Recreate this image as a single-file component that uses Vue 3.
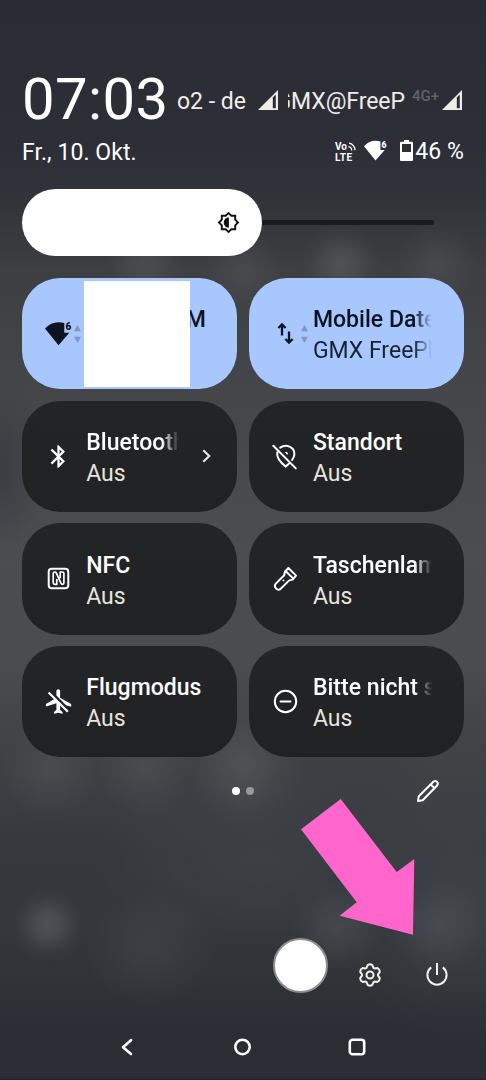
<template>
  <div class="shade">
    <header class="status">
      <div class="status__top">
        <span class="status__clock">07:03</span>
        <span class="status__carrier">o2 - de</span>
        <svg class="status__signal" viewBox="0 0 20 20">
          <path fill-rule="evenodd" d="M0 20 20 0v20zM14.8 7.6v10.6h3V4.6z" />
        </svg>
        <span class="status__carrier status__carrier--cut"><span>GMX@FreeP</span></span>
        <span class="status__net">4G+</span>
        <svg class="status__signal status__signal--last" viewBox="0 0 20 20">
          <path fill-rule="evenodd" d="M0 20 20 0v20zM14.8 7.6v10.6h3V4.6z" />
        </svg>
      </div>
      <div class="status__bottom">
        <span class="status__date">Fr., 10. Okt.</span>
        <svg class="status__volte" viewBox="0 0 21 20">
          <text x="0" y="8.2" textLength="12">Vo</text>
          <text x="0" y="18.8" textLength="17">LTE</text>
          <path d="M13.5 4.6a4 4 0 0 1 3.2 4M14 1.2a7 7 0 0 1 6 7" />
        </svg>
        <svg class="status__wifi" viewBox="0 0 27 27">
          <path d="M0 8.5Q6 2.2 13.5 2.2q3 0 5.8.8v9.8h5L13.5 25.2z" />
          <text x="20.4" y="10.3">6</text>
        </svg>
        <svg class="status__battery" viewBox="0 0 13 21">
          <path fill-rule="evenodd" d="M4 0h5v1.8h3q1 0 1 1V20q0 1-1 1H1q-1 0-1-1V2.8q0-1 1-1h3zM2 4v8h9V4z" />
        </svg>
        <span class="status__percent">46 %</span>
      </div>
    </header>

    <div class="slider">
      <div class="slider__fill">
        <svg class="slider__icon" viewBox="0 0 24 24">
          <path d="M20 8.69V4h-4.69L12 .69 8.69 4H4v4.69L.69 12 4 15.31V20h4.69L12 23.31 15.31 20H20v-4.69L23.31 12 20 8.69zm-2 5.79V18h-3.52L12 20.48 9.52 18H6v-3.52L3.52 12 6 9.52V6h3.52L12 3.52 14.48 6H18v3.52L20.48 12 18 14.48z" />
          <path d="M12.4 6.6v10.8a5.4 5.4 0 0 1 0-10.8z" />
        </svg>
      </div>
      <div class="slider__track"></div>
    </div>

    <main class="tiles">
      <button
        v-for="tile in tiles"
        :key="tile.id"
        class="tile"
        :class="{ 'tile--on': tile.active }"
      >
        <svg class="tile__icon" :viewBox="tile.box || '0 0 27 27'">
          <path v-if="tile.fill" :d="tile.fill" />
          <path v-if="tile.line" class="tile__line" :d="tile.line" />
          <path v-if="tile.thin" class="tile__line tile__line--thin" :d="tile.thin" />
          <text v-if="tile.id === 'wifi'" x="20.6" y="10.2">6</text>
        </svg>
        <svg v-if="tile.active" class="tile__activity" viewBox="0 0 7 18">
          <path d="M3.5 0 7 6.2H0zM3.5 18 0 11.8h7z" />
        </svg>
        <span class="tile__text">
          <span class="tile__label" :class="{ 'is-cut': tile.cut, 'is-end': tile.id === 'wifi' }">{{ tile.label }}</span>
          <span class="tile__state" :class="{ 'is-cut': tile.active }">{{ tile.state }}</span>
        </span>
        <svg v-if="tile.more" class="tile__more" viewBox="0 0 9 14">
          <path d="M1.3 1.2 7.2 7l-5.9 5.8" />
        </svg>
        <span v-if="tile.id === 'wifi'" class="tile__cover"></span>
      </button>
    </main>

    <div class="pager">
      <span class="pager__dots">
        <i class="pager__dot pager__dot--on"></i>
        <i class="pager__dot"></i>
      </span>
      <svg class="pager__edit" viewBox="0 0 24 24">
        <path d="M2 22.1l.8-4.9L17.3 2.7q1.9-1.5 3.6.1t.2 3.7L6.7 21.2zM14.6 5.4l4.2 4.1" />
      </svg>
    </div>

    <footer class="actions">
      <span class="actions__user"></span>
      <svg class="actions__icon" viewBox="0 0 24 24">
        <path d="M9.7 2.1Q12 .4 14.3 2.1l1.2 2.7 1 .6 3-.3q2.5 1.2 2.2 4L20 11.4v1.2l1.7 2.3q.3 2.8-2.2 4l-3-.3-1 .6-1.2 2.7q-2.3 1.7-4.6 0l-1.2-2.7-1-.6-3 .3q-2.5-1.2-2.2-4L4 12.6v-1.2L2.3 9.1q-.3-2.8 2.2-4l3 .3 1-.6z" />
        <circle cx="12" cy="12" r="3.5" />
      </svg>
      <svg class="actions__icon actions__icon--power" viewBox="0 0 24 24">
        <path d="M6.2 5.4a9.6 9.6 0 1 0 11.6 0M12 1v12" />
      </svg>
    </footer>

    <nav class="nav">
      <svg viewBox="0 0 20 20"><path d="M14 3.2 6 10.2l8 6.8" /></svg>
      <svg viewBox="0 0 20 20"><circle cx="10.5" cy="10" r="7.2" /></svg>
      <svg viewBox="0 0 20 20"><rect x="2.8" y="2.8" width="14.4" height="14.4" rx="2.8" /></svg>
    </nav>

    <!-- marker pointing at the power button -->
    <svg class="marker" viewBox="0 0 114 136">
      <path d="M0 30.3 39.7 0l56 73 17.6-13-1.3 75.7-73.3-19 17-13.4z" />
    </svg>
  </div>
</template>

<script setup>
const tiles = [
  {
    id: 'wifi',
    label: 'M',
    state: '',
    active: true,
    fill: 'M0 8.5Q6 2.2 13.5 2.2q3 0 5.8.8v9.8h5L13.5 25.2z',
  },
  {
    id: 'data',
    label: 'Mobile Daten',
    state: 'GMX FreePhone',
    active: true,
    cut: true,
    line: 'M10 15.6V4.8M6.4 8 10 4.3 13.6 8M17 11.4v10.8M13.4 19l3.6 3.7 3.6-3.7',
  },
  {
    id: 'bluetooth',
    label: 'Bluetooth',
    state: 'Aus',
    cut: true,
    more: true,
    box: '0 0 24 24',
    fill: 'M17.71 7.71L12 2h-1v7.59L6.41 5 5 6.41 10.59 12 5 17.59 6.41 19 11 14.41V22h1l5.71-5.71-4.3-4.29 4.3-4.29zM13 5.83l1.88 1.88L13 9.59V5.83zm1.88 10.46L13 18.17v-3.76l1.88 1.88z',
  },
  {
    id: 'location',
    label: 'Standort',
    state: 'Aus',
    fill: 'M13 9.4a1.7 1.7 0 0 1 2.8 1.8l-.6.6z',
    line: 'M1.3 2.8 23.8 25.4M8.2 4.6C14 .6 22.6 4 22.4 11.2q-.1 2.5-2.3 5.8M5.2 9.6C4.6 15 8.3 19.4 13.8 23.6l3-2.8',
  },
  {
    id: 'nfc',
    label: 'NFC',
    state: 'Aus',
    line: 'M6.8 3.7h13.4q3.1 0 3.1 3.1v13.4q0 3.1-3.1 3.1H6.8q-3.1 0-3.1-3.1V6.8q0-3.1 3.1-3.1z',
    thin: 'M11.8 19.4h-2q-1.6 0-1.6-1.6V8.6q0-1.6 1.6-1.6 1 0 1.5.9l4.6 10.3q.5 1.2 1.6 1.2 1.4 0 1.4-1.6V8.6q0-1.6-1.6-1.6h-2.1v5.4M11.8 19.4v-4.8',
  },
  {
    id: 'torch',
    label: 'Taschenlampe',
    state: 'Aus',
    cut: true,
    line: 'M16.4 3 24 10.6l-3.4 4-3.4.8-8.6 8.5q-2.3 1.7-4.5-.4t-.5-4.6L12.2 10.3l.7-3.5zM13.6 6l7.4 7.4M11.5 15.5v.1',
  },
  {
    id: 'flight',
    label: 'Flugmodus',
    state: 'Aus',
    box: '.7 1 22 22',
    fill: 'M13 9V3.5C13 2.67 12.33 2 11.5 2S10 2.67 10 3.5v3.68l7.83 7.83L22 16.2V14l-9-5zM3 5.27l4.99 4.99L1.5 14v2l8.5-2.5V19l-2 1.5V22l3.5-.8 3.5.8v-1.5L13 19v-3.73L18.73 21 20 19.73 4.27 4z',
  },
  {
    id: 'dnd',
    label: 'Bitte nicht stören',
    state: 'Aus',
    cut: true,
    line: 'M2.8 13.5a10.7 10.7 0 1 0 21.4 0a10.7 10.7 0 1 0-21.4 0zM8.5 13.5h10',
  },
]
</script>

<style>
body {
  background: #2b2d35;
}
</style>

<style scoped>
.shade {
  position: relative;
  display: flex;
  flex-direction: column;
  box-sizing: border-box;
  width: 486px;
  height: 1080px;
  padding: 66px 22px 0;
  overflow: hidden;
  border-bottom: 1px solid #251f2d;
  color: #fff;
  font-family: Roboto, "Liberation Sans", sans-serif;
  background:
    radial-gradient(circle 38px at 48px 925px, rgba(255,255,255,.13), rgba(255,255,255,.1) 30%, rgba(255,255,255,.02) 75%, transparent),
    radial-gradient(circle 48px at 338px 928px, rgba(255,255,255,.08), rgba(255,255,255,.05) 40%, rgba(255,255,255,.01) 78%, transparent),
    radial-gradient(circle 48px at 438px 928px, rgba(255,255,255,.06), rgba(255,255,255,.04) 40%, rgba(255,255,255,.01) 78%, transparent),
    radial-gradient(circle 40px at 341px 263px, rgba(255,255,255,.1), rgba(255,255,255,.07) 35%, rgba(255,255,255,.01) 78%, transparent),
    radial-gradient(circle 40px at 437px 262px, rgba(255,255,255,.06), rgba(255,255,255,.04) 35%, rgba(255,255,255,.01) 78%, transparent),
    radial-gradient(circle 40px at 145px 265px, rgba(255,255,255,.07), rgba(255,255,255,.05) 35%, rgba(255,255,255,.01) 78%, transparent),
    radial-gradient(circle 40px at 243px 270px, rgba(255,255,255,.06), rgba(255,255,255,.04) 35%, rgba(255,255,255,.01) 78%, transparent),
    radial-gradient(circle 60px at 243px 768px, rgba(255,255,255,.09), rgba(255,255,255,.06) 35%, rgba(255,255,255,.01) 78%, transparent),
    radial-gradient(circle 50px at 50px 772px, rgba(255,255,255,.06), rgba(255,255,255,.04) 35%, rgba(255,255,255,.01) 78%, transparent),
    radial-gradient(circle 50px at 145px 770px, rgba(255,255,255,.06), rgba(255,255,255,.04) 35%, rgba(255,255,255,.01) 78%, transparent),
    radial-gradient(ellipse 65px 60px at 150px 950px, rgba(255,255,255,.05), transparent),
    radial-gradient(ellipse 170px 90px at 260px 860px, rgba(255,255,255,.04), transparent),
    radial-gradient(ellipse 120px 160px at 460px 900px, rgba(255,255,255,.05), transparent),
    radial-gradient(ellipse 50px 90px at 0 470px, rgba(36,42,50,.4), transparent),
    linear-gradient(#292c34 0, #2c2f36 150px, #313439 205px, #3d3f42 270px, #454649 390px, #4c4d51 550px, #4b4c50 660px, #404246 750px, #3a3d41 800px, #35383d 850px, #34373c 920px, #303338 980px, #2b2d34 1030px, #2b2d35 1080px);
}

.status__top {
  display: flex;
  align-items: center;
  height: 70px;
}
.status__clock {
  align-self: flex-start;
  width: 155px;
  font-size: 58px;
  line-height: 67px;
  letter-spacing: .4px;
}
.status__carrier {
  width: 82px;
  margin-top: 2px;
  font-size: 23px;
  line-height: 30px;
  color: #f0ece8;
  white-space: nowrap;
}
.status__carrier--cut {
  display: flex;
  justify-content: flex-end;
  width: 117px;
  overflow: hidden;
  letter-spacing: -.04px;
}
.status__signal {
  width: 20px;
  height: 20px;
  margin: -2px 0 0 -1px;
  fill: #f0ece8;
}
.status__signal + .status__carrier { margin-left: 10px; }
.status__net {
  width: 30px;
  margin: -10px 0 0 7px;
  font-size: 15px;
  font-weight: 500;
  color: #606266;
}
.status__signal--last { margin-left: 0; }

.status__bottom {
  display: flex;
  align-items: center;
  height: 32px;
}
.status__date {
  margin-right: auto;
  font-size: 23px;
  letter-spacing: .06px;
}
.status__volte {
  width: 21px;
  height: 20px;
  margin: -1px 8px 0 0;
  fill: #fff;
  overflow: visible;
}
.status__volte text {
  font-size: 10px;
  font-weight: 700;
}
.status__volte path {
  fill: none;
  stroke: #fff;
  stroke-width: 1.3;
}
.status__wifi {
  width: 23px;
  height: 23px;
  margin: -4px 13px 0 0;
  fill: #fff;
  overflow: visible;
}
.status__wifi text,
.tile__icon text {
  font-size: 10px;
  font-weight: 900;
}
.status__battery {
  width: 13px;
  height: 21px;
  margin: -3px 2px 0 0;
  fill: #fff;
}
.status__percent {
  margin-top: -2px;
  font-size: 23px;
  letter-spacing: .1px;
  white-space: nowrap;
}

.slider {
  display: flex;
  align-items: center;
  height: 67px;
  margin-top: 21px;
}
.slider__fill {
  z-index: 1;
  display: flex;
  align-items: center;
  justify-content: flex-end;
  box-sizing: border-box;
  width: 239.5px;
  height: 67px;
  padding-right: 22px;
  border-radius: 34px;
  background: #fff;
}
.slider__icon {
  width: 23px;
  height: 23px;
  fill: #111;
}
.slider__track {
  width: 176px;
  height: 5.5px;
  margin-left: -4px;
  border-radius: 0 3px 3px 0;
  background: #1a1b1d;
}

.tiles {
  display: grid;
  grid-template-columns: 215.3px 215px;
  grid-auto-rows: 111.3px;
  gap: 11.4px;
  margin-top: 22px;
}
.tile {
  position: relative;
  display: flex;
  align-items: center;
  padding: 0 31.5px 0 23px;
  border: 0;
  border-radius: 38px;
  background: linear-gradient(rgba(34,35,37,.96), rgba(31,32,34,.96));
  color: #fff;
  font-family: inherit;
  text-align: left;
}
.tile--on {
  background: #a8c7ff;
  color: #0b1420;
}
.tile__icon {
  flex: none;
  width: 27px;
  height: 27px;
  margin: -.5px 14.2px 0 0;
  fill: currentColor;
  overflow: visible;
}
.tile__line {
  fill: none;
  stroke: currentColor;
  stroke-width: 2;
  stroke-linecap: round;
  stroke-linejoin: round;
}
.tile__line--thin { stroke-width: 1.7; }
.tile--on .tile__line {
  stroke-width: 2.3;
  stroke-linecap: butt;
  stroke-linejoin: miter;
}
.tile__activity {
  flex: none;
  width: 7px;
  height: 18px;
  margin: 0 4.8px 0 -11.8px;
  fill: #7f98c0;
}
.tile__text {
  display: flex;
  flex: 1;
  flex-direction: column;
  min-width: 0;
  padding-top: 3px;
}
.tile__label,
.tile__state {
  height: 31px;
  overflow: hidden;
  font-size: 23px;
  line-height: 31px;
  white-space: nowrap;
}
.tile__label {
  font-weight: 500;
  letter-spacing: .03px;
}
.tile__state { color: #e8e3dd; }
.tile--on .tile__state { color: #17222f; }
.is-cut {
  -webkit-mask-image: linear-gradient(270deg, transparent, #000 18px);
  mask-image: linear-gradient(270deg, transparent, #000 18px);
}
.is-end { text-align: right; }
.tile__more {
  flex: none;
  width: 9px;
  height: 14px;
  margin: 0 -5px 0 23px;
  fill: none;
  stroke: #e8e3dd;
  stroke-width: 2.2;
}
.tile__cover {
  position: absolute;
  top: 3px;
  left: 62px;
  width: 106px;
  height: 106px;
  background: #fff;
}

.pager {
  display: flex;
  align-items: center;
  justify-content: space-between;
  height: 24px;
  margin-top: 21.3px;
  padding: 0 24px 0 210px;
}
.pager__dots {
  display: flex;
  gap: 5.5px;
}
.pager__dot {
  width: 8px;
  height: 8px;
  border-radius: 50%;
  background: #98999b;
}
.pager__dot--on { background: #fff; }
.pager__edit {
  width: 24px;
  height: 24px;
  fill: none;
  stroke: #fff;
  stroke-width: 2;
  stroke-linejoin: round;
}

.actions {
  display: flex;
  align-items: center;
  justify-content: flex-end;
  height: 56px;
  margin-top: 134.7px;
  padding-right: 15.5px;
}
.actions__user {
  box-sizing: border-box;
  width: 55px;
  height: 55px;
  margin-right: 29.5px;
  border: 2px solid #8d8e92;
  border-radius: 50%;
  background: #fff;
}
.actions__icon {
  width: 24px;
  height: 24px;
  margin-top: 20px;
  fill: none;
  stroke: #f2efec;
  stroke-width: 2;
  stroke-linejoin: round;
}
.actions__icon--power {
  margin-top: 18px;
  margin-left: 43px;
}

.nav {
  display: flex;
  align-items: center;
  gap: 95px;
  height: 20px;
  margin-top: 43.7px;
  padding-left: 95px;
}
.nav svg {
  width: 20px;
  height: 20px;
  fill: none;
  stroke: #fff;
  stroke-width: 2.6;
  stroke-linecap: round;
  stroke-linejoin: round;
}

.marker {
  position: absolute;
  top: 799px;
  left: 301px;
  width: 114px;
  height: 136px;
  fill: #ff66cc;
}
</style>
